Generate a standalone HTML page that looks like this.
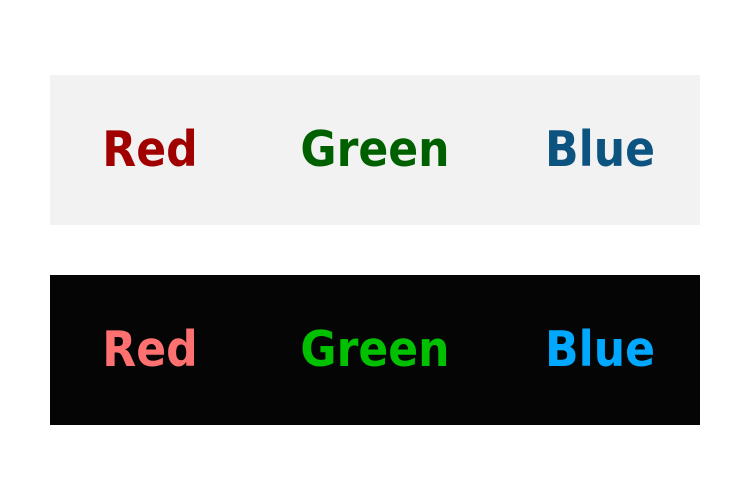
<!DOCTYPE html>
<html><head><style>
html,body{margin:0;width:750px;height:500px;background:#fff;overflow:hidden}
.box{position:absolute;left:50px;width:650px;height:150px}
.t{position:absolute;font-family:"DejaVu Sans Condensed","DejaVu Sans",sans-serif;font-stretch:condensed;font-weight:bold;font-size:49px;line-height:1;transform:translateX(-50%);white-space:nowrap;top:50px}
</style></head><body>
<div class="box" style="top:75px;background:#f2f2f2">
<span class="t" style="left:100px;color:#a00000">Red</span>
<span class="t" style="left:325px;color:#006000">Green</span>
<span class="t" style="left:550px;color:#0c5380">Blue</span>
</div>
<div class="box" style="top:275px;background:#050505">
<span class="t" style="left:100px;color:#ff7070">Red</span>
<span class="t" style="left:325px;color:#00c000">Green</span>
<span class="t" style="left:550px;color:#00a8ff">Blue</span>
</div>
</body></html>
